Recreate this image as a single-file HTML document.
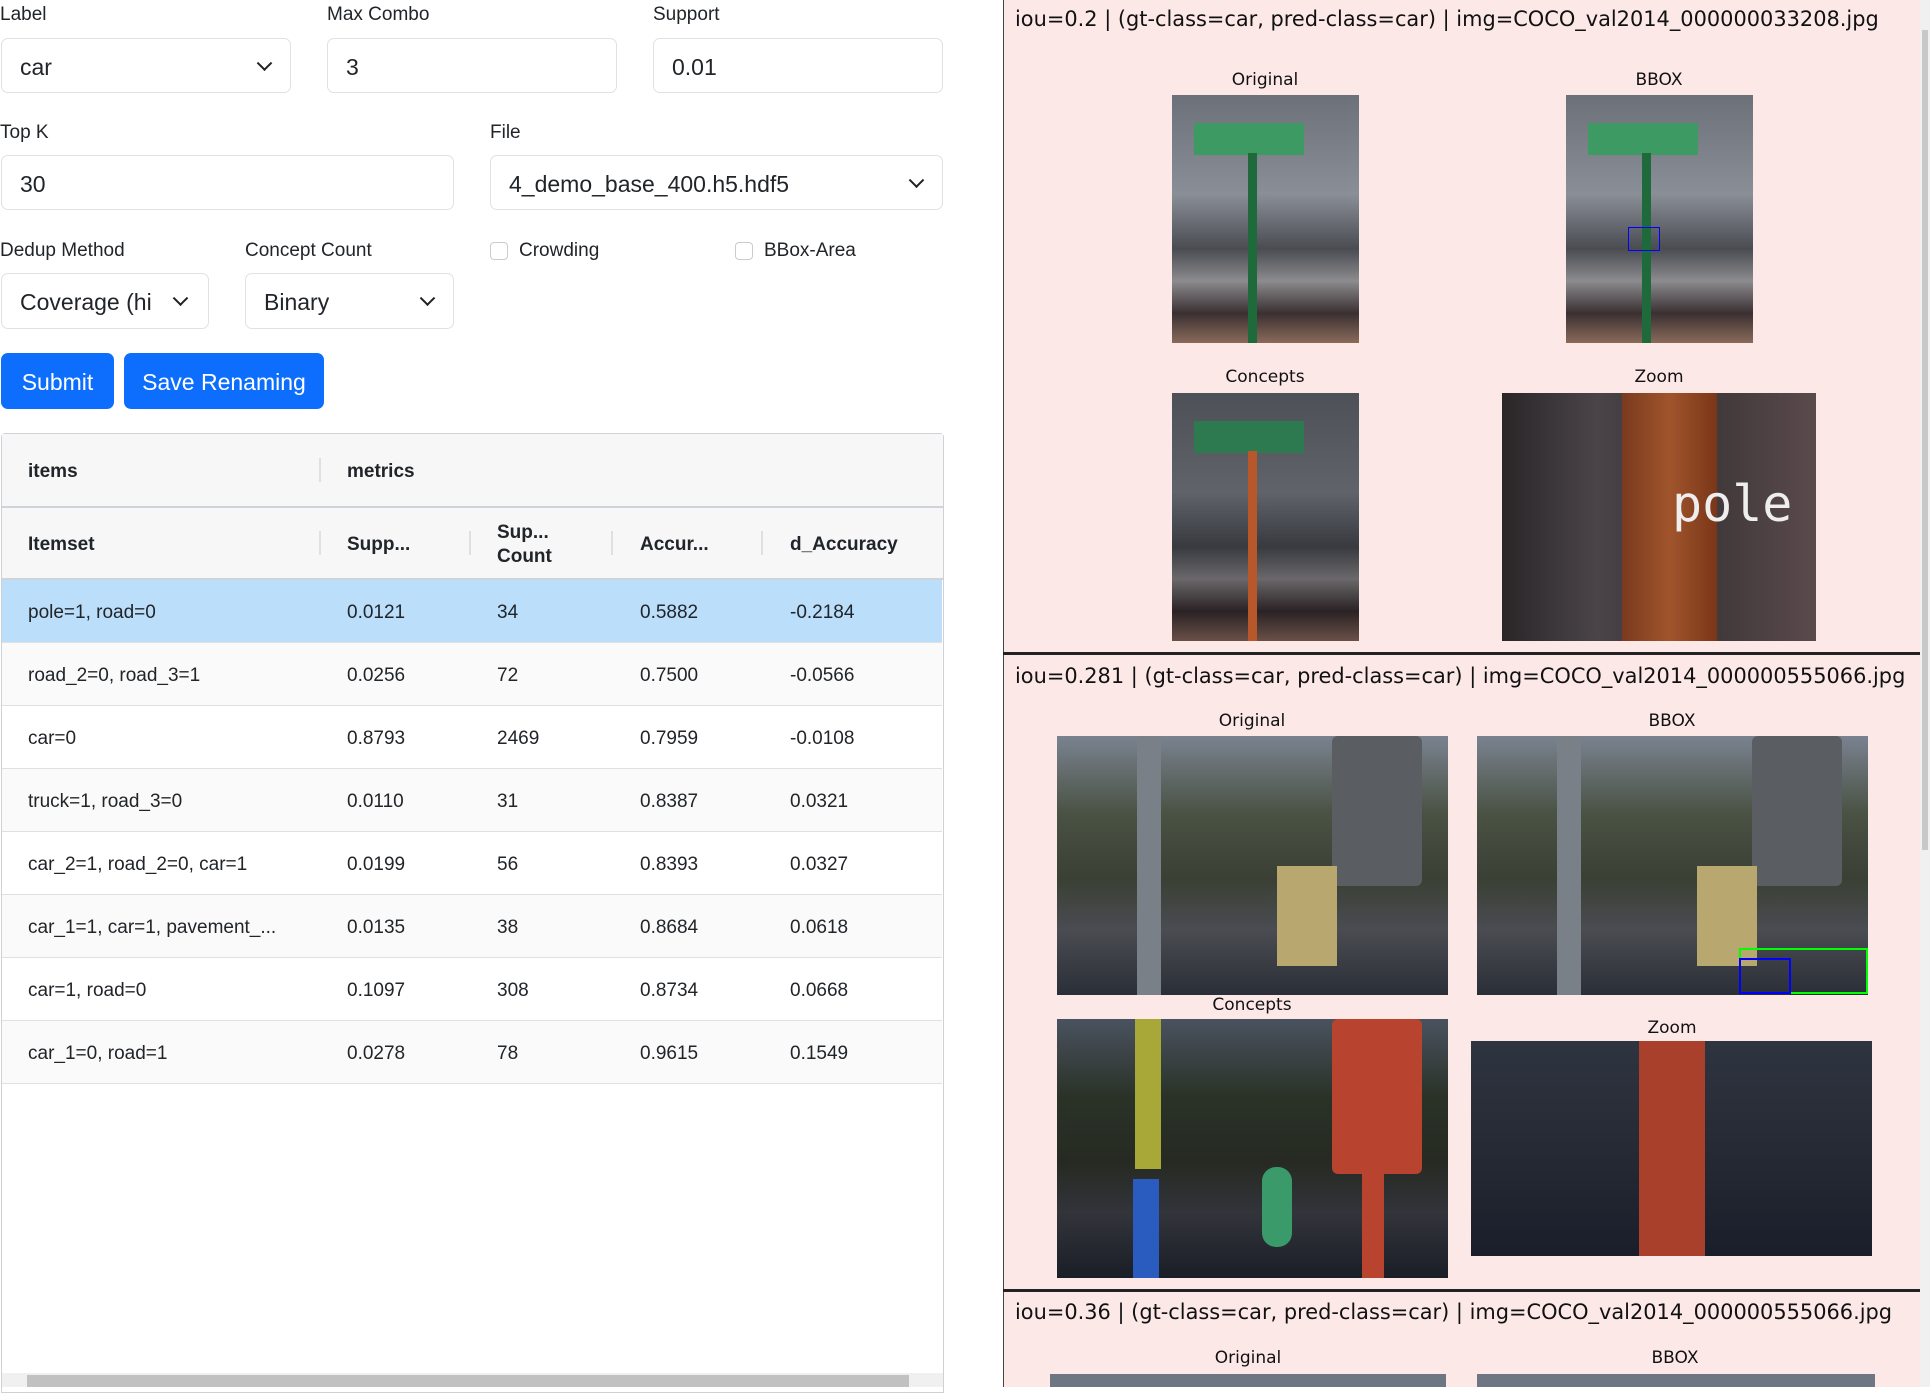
<!DOCTYPE html>
<html><head><meta charset="utf-8"><style>
*{box-sizing:border-box;margin:0;padding:0}
body{width:1930px;height:1387px;overflow:hidden;background:#fff;font-family:"Liberation Sans",sans-serif;color:#212529;position:relative}
.a{position:absolute}
.lbl{position:absolute;font-size:19px;color:#212529}
.inp{position:absolute;border:1px solid #dee2e6;border-radius:7px;background:#fff;font-size:23px;padding-left:18px;display:flex;align-items:center;padding-top:3px}
.chev{position:absolute;right:20px;top:50%;width:11px;height:11px;border-right:2px solid #222;border-bottom:2px solid #222;transform:translateY(-75%) rotate(45deg)}
.btn{position:absolute;background:#0d6efd;color:#fff;border-radius:7px;font-size:23px;display:flex;align-items:center;justify-content:center;padding-top:3px}
.cb{position:absolute;width:18px;height:18px;border:1px solid #ccc;border-radius:4px;background:#fff}
.th{position:absolute;font-weight:bold;font-size:19px}
.sep{position:absolute;width:2px;height:24px;background:#e0e0e0}
.row{position:absolute;left:2px;width:940px;height:63px;border-bottom:1px solid #e0e0e0;font-size:19px}
.row span{position:absolute;top:22px}
.rp{position:absolute;left:1004px;width:916px;background:#fde8e8}
.ttl{position:absolute;left:12px;font-family:"DejaVu Sans",sans-serif;font-size:20.9px;color:#111;white-space:nowrap}
.cap{position:absolute;font-family:"DejaVu Sans",sans-serif;font-size:17px;color:#111;transform:translateX(-50%);white-space:nowrap}
.im{position:absolute;overflow:hidden}
</style></head><body>

<div class="lbl" style="left:0;top:4px">Label</div>
<div class="lbl" style="left:327px;top:4px">Max Combo</div>
<div class="lbl" style="left:653px;top:4px">Support</div>
<div class="inp" style="left:1px;top:38px;width:290px;height:55px">car<div class="chev"></div></div>
<div class="inp" style="left:327px;top:38px;width:290px;height:55px">3</div>
<div class="inp" style="left:653px;top:38px;width:290px;height:55px">0.01</div>

<div class="lbl" style="left:0;top:122px">Top K</div>
<div class="lbl" style="left:490px;top:122px">File</div>
<div class="inp" style="left:1px;top:155px;width:453px;height:55px">30</div>
<div class="inp" style="left:490px;top:155px;width:453px;height:55px">4_demo_base_400.h5.hdf5<div class="chev"></div></div>

<div class="lbl" style="left:0;top:240px">Dedup Method</div>
<div class="lbl" style="left:245px;top:240px">Concept Count</div>
<div class="cb" style="left:490px;top:242px"></div><div class="lbl" style="left:519px;top:240px">Crowding</div>
<div class="cb" style="left:735px;top:242px"></div><div class="lbl" style="left:764px;top:240px">BBox-Area</div>
<div class="inp" style="left:1px;top:273px;width:208px;height:56px">Coverage (hi<div class="chev" style="right:22px"></div></div>
<div class="inp" style="left:245px;top:273px;width:209px;height:56px">Binary<div class="chev"></div></div>

<div class="btn" style="left:1px;top:353px;width:113px;height:56px">Submit</div>
<div class="btn" style="left:124px;top:353px;width:200px;height:56px">Save Renaming</div>

<div class="a" style="left:1px;top:433px;width:943px;height:960px;border:1px solid #d0d0d8;border-radius:4px 4px 0 0"></div>
<div class="a" style="left:2px;top:434px;width:941px;height:146px;background:#f7f7f8"></div>
<div class="a" style="left:2px;top:506px;width:941px;height:2px;background:#cfd4da"></div>
<div class="a" style="left:2px;top:578px;width:941px;height:2px;background:#cfd4da"></div>
<div class="th" style="left:28px;top:461px">items</div>
<div class="sep" style="left:319px;top:458px"></div>
<div class="th" style="left:347px;top:461px">metrics</div>
<div class="th" style="left:28px;top:534px">Itemset</div>
<div class="sep" style="left:319px;top:531px"></div>
<div class="th" style="left:347px;top:534px">Supp...</div>
<div class="sep" style="left:469px;top:531px"></div>
<div class="th" style="left:497px;top:521px;line-height:24px">Sup...<br>Count</div>
<div class="sep" style="left:611px;top:531px"></div>
<div class="th" style="left:640px;top:534px">Accur...</div>
<div class="sep" style="left:761px;top:531px"></div>
<div class="th" style="left:790px;top:534px">d_Accuracy</div>

<div class="row" style="top:580px;background:#bbdefb"><span style="left:26px">pole=1, road=0</span><span style="left:345px">0.0121</span><span style="left:495px">34</span><span style="left:638px">0.5882</span><span style="left:788px">-0.2184</span></div>
<div class="row" style="top:643px;background:#fafafa"><span style="left:26px">road_2=0, road_3=1</span><span style="left:345px">0.0256</span><span style="left:495px">72</span><span style="left:638px">0.7500</span><span style="left:788px">-0.0566</span></div>
<div class="row" style="top:706px"><span style="left:26px">car=0</span><span style="left:345px">0.8793</span><span style="left:495px">2469</span><span style="left:638px">0.7959</span><span style="left:788px">-0.0108</span></div>
<div class="row" style="top:769px;background:#fafafa"><span style="left:26px">truck=1, road_3=0</span><span style="left:345px">0.0110</span><span style="left:495px">31</span><span style="left:638px">0.8387</span><span style="left:788px">0.0321</span></div>
<div class="row" style="top:832px"><span style="left:26px">car_2=1, road_2=0, car=1</span><span style="left:345px">0.0199</span><span style="left:495px">56</span><span style="left:638px">0.8393</span><span style="left:788px">0.0327</span></div>
<div class="row" style="top:895px;background:#fafafa"><span style="left:26px">car_1=1, car=1, pavement_...</span><span style="left:345px">0.0135</span><span style="left:495px">38</span><span style="left:638px">0.8684</span><span style="left:788px">0.0618</span></div>
<div class="row" style="top:958px"><span style="left:26px">car=1, road=0</span><span style="left:345px">0.1097</span><span style="left:495px">308</span><span style="left:638px">0.8734</span><span style="left:788px">0.0668</span></div>
<div class="row" style="top:1021px;background:#fafafa"><span style="left:26px">car_1=0, road=1</span><span style="left:345px">0.0278</span><span style="left:495px">78</span><span style="left:638px">0.9615</span><span style="left:788px">0.1549</span></div>
<div class="a" style="left:2px;top:1373px;width:941px;height:14px;background:#f0f0f0"></div>
<div class="a" style="left:27px;top:1375px;width:882px;height:12px;background:#c1c1c1"></div>

<!-- right panel -->
<div class="a" style="left:1003px;top:0;width:1px;height:1387px;background:#444"></div>
<div class="rp" style="top:0;height:652px"></div>
<div class="a" style="left:1003px;top:652px;width:917px;height:3px;background:#222"></div>
<div class="rp" style="top:655px;height:634px"></div>
<div class="a" style="left:1003px;top:1289px;width:917px;height:3px;background:#222"></div>
<div class="rp" style="top:1292px;height:95px"></div>
<div class="a" style="left:1920px;top:0;width:10px;height:1387px;background:#f0f0f0"></div>
<div class="a" style="left:1922px;top:30px;width:6px;height:820px;background:#c8c8c8"></div>

<div class="ttl" style="left:1015px;top:7px">iou=0.2 | (gt-class=car, pred-class=car) | img=COCO_val2014_000000033208.jpg</div>
<div class="cap" style="left:1265px;top:70px">Original</div>
<div class="cap" style="left:1659px;top:70px">BBOX</div>
<div class="cap" style="left:1265px;top:367px">Concepts</div>
<div class="cap" style="left:1659px;top:367px">Zoom</div>

<div class="im" style="left:1172px;top:95px;width:187px;height:248px;background:linear-gradient(180deg,#6c7078 0%,#8a8e96 40%,#4a4c52 62%,#8c8b8e 75%,#3a3032 88%,#8a6a5a 100%)"><div class="a" style="left:22px;top:28px;width:110px;height:32px;background:#3c9a62"></div><div class="a" style="left:76px;top:58px;width:9px;height:190px;background:#1e6a3a"></div></div>
<div class="im" style="left:1566px;top:95px;width:187px;height:248px;background:linear-gradient(180deg,#6c7078 0%,#8a8e96 40%,#4a4c52 62%,#8c8b8e 75%,#3a3032 88%,#8a6a5a 100%)"><div class="a" style="left:22px;top:28px;width:110px;height:32px;background:#3c9a62"></div><div class="a" style="left:76px;top:58px;width:9px;height:190px;background:#1e6a3a"></div><div class="a" style="left:62px;top:132px;width:32px;height:24px;border:1px solid #00f"></div></div>
<div class="im" style="left:1172px;top:393px;width:187px;height:248px;background:linear-gradient(180deg,#4e5058 0%,#60636a 40%,#383a40 62%,#6a686a 75%,#2a2224 88%,#6a5048 100%)"><div class="a" style="left:22px;top:28px;width:110px;height:32px;background:#2e7a50"></div><div class="a" style="left:76px;top:58px;width:9px;height:190px;background:#b8582a"></div></div>
<div class="im" style="left:1502px;top:393px;width:314px;height:248px;background:linear-gradient(90deg,#2a2628,#4a4448 30%,#3a3436 60%,#5a4a4c)"><div class="a" style="left:120px;top:0;width:95px;height:248px;background:linear-gradient(90deg,#7a3a20,#a0552c,#7a3618)"></div><div class="a" style="left:170px;top:82px;font-family:'DejaVu Sans Mono',monospace;font-size:50px;color:#eee">pole</div></div>

<div class="ttl" style="left:1015px;top:664px">iou=0.281 | (gt-class=car, pred-class=car) | img=COCO_val2014_000000555066.jpg</div>
<div class="cap" style="left:1252px;top:711px">Original</div>
<div class="cap" style="left:1672px;top:711px">BBOX</div>
<div class="cap" style="left:1252px;top:995px">Concepts</div>
<div class="cap" style="left:1672px;top:1018px">Zoom</div>

<div class="im" style="left:1057px;top:736px;width:391px;height:259px;background:linear-gradient(180deg,#7a8290 0%,#4a5244 30%,#3a4034 55%,#4a4c52 75%,#2a2e36 100%)"><div class="a" style="left:80px;top:0;width:24px;height:259px;background:#7a8088"></div><div class="a" style="left:275px;top:0;width:90px;height:150px;background:#5a5e62;border-radius:6px"></div><div class="a" style="left:220px;top:130px;width:60px;height:100px;background:#b8a870"></div></div>
<div class="im" style="left:1477px;top:736px;width:391px;height:259px;background:linear-gradient(180deg,#7a8290 0%,#4a5244 30%,#3a4034 55%,#4a4c52 75%,#2a2e36 100%)"><div class="a" style="left:80px;top:0;width:24px;height:259px;background:#7a8088"></div><div class="a" style="left:275px;top:0;width:90px;height:150px;background:#5a5e62;border-radius:6px"></div><div class="a" style="left:220px;top:130px;width:60px;height:100px;background:#b8a870"></div><div class="a" style="left:262px;top:212px;width:129px;height:46px;border:2px solid #0f0"></div><div class="a" style="left:262px;top:222px;width:52px;height:36px;border:2px solid #00f"></div></div>
<div class="im" style="left:1057px;top:1019px;width:391px;height:259px;background:linear-gradient(180deg,#4a5260 0%,#2a3228 30%,#262a22 55%,#32343a 75%,#1a1e26 100%)"><div class="a" style="left:78px;top:0;width:26px;height:150px;background:#a8a838"></div><div class="a" style="left:76px;top:160px;width:26px;height:99px;background:#2a5cc0"></div><div class="a" style="left:275px;top:0;width:90px;height:155px;background:#b84430;border-radius:6px"></div><div class="a" style="left:305px;top:150px;width:22px;height:109px;background:#b84430"></div><div class="a" style="left:205px;top:148px;width:30px;height:80px;background:#3a9a6a;border-radius:14px"></div></div>
<div class="im" style="left:1471px;top:1041px;width:401px;height:215px;background:linear-gradient(180deg,#2e3440,#262a34 50%,#1a1e2a)"><div class="a" style="left:168px;top:0;width:66px;height:215px;background:#a8402c"></div></div>

<div class="ttl" style="left:1015px;top:1300px">iou=0.36 | (gt-class=car, pred-class=car) | img=COCO_val2014_000000555066.jpg</div>
<div class="cap" style="left:1248px;top:1348px">Original</div>
<div class="cap" style="left:1675px;top:1348px">BBOX</div>
<div class="im" style="left:1050px;top:1374px;width:396px;height:13px;background:#6e7684"></div>
<div class="im" style="left:1477px;top:1374px;width:398px;height:13px;background:#6e7684"></div>
</body></html>
